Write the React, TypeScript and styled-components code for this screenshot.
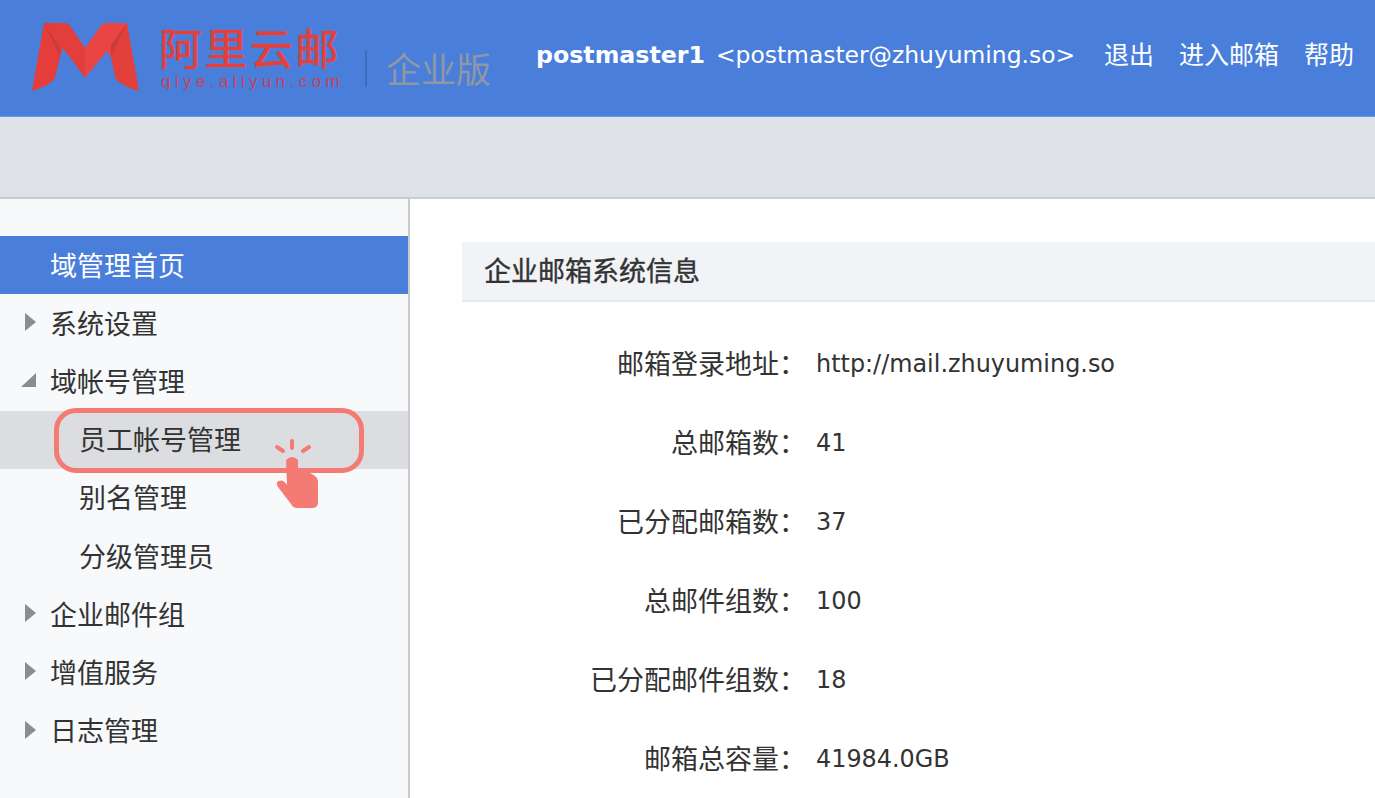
import styled, { createGlobalStyle } from "styled-components";

const GlobalStyle = createGlobalStyle`
  html, body {
    margin: 0;
    padding: 0;
    height: 798px;
    overflow: hidden;
    background: #fff;
    font-family: "DejaVu Sans", "Noto Sans CJK SC", sans-serif;
    color: #333;
  }
`;

const Page = styled.div`
  width: 1375px;
  height: 798px;
  overflow: hidden;
  display: flex;
  flex-direction: column;
`;

const Header = styled.header`
  height: 116px;
  flex: none;
  background: #4a7edb;
  border-bottom: 1px solid #6f97e0;
  display: flex;
  align-items: flex-start;
`;

const Logo = styled.div`
  display: flex;
  margin: 23px 0 0 31px;
  width: 500px;
  flex: none;
`;

const BrandText = styled.div`
  margin-left: 18px;
  width: 190px;
  display: flex;
  flex-direction: column;
`;

const BrandName = styled.div`
  font-family: "Noto Sans CJK SC", sans-serif;
  font-size: 43px;
  line-height: 47px;
  height: 49px;
  letter-spacing: 2.5px;
  color: #e43f3a;
  white-space: nowrap;
  -webkit-text-stroke: 0.6px #e43f3a;
`;

const BrandUrl = styled.div`
  font-family: "Liberation Sans", sans-serif;
  font-size: 17px;
  line-height: 20px;
  letter-spacing: 4.4px;
  margin-left: 2px;
  color: #c9405a;
  white-space: nowrap;
`;

const Divider = styled.div`
  width: 2px;
  height: 37px;
  margin: 27px 0 0 16px;
  background: #3e6cbd;
`;

const Edition = styled.div`
  font-size: 35px;
  line-height: 40px;
  margin: 28px 0 0 19px;
  color: #8f97a6;
  white-space: nowrap;
`;

const UserBar = styled.div`
  display: flex;
  align-items: center;
  height: 30px;
  margin-top: 40px;
  color: #fff;
  font-size: 25px;
  white-space: nowrap;
`;

const UserName = styled.span`
  font-weight: 700;
  font-size: 23.7px;
  margin-left: 5px;
`;

const UserMail = styled.span`
  margin-left: 11px;
  font-size: 23.4px;
`;

const HeaderLink = styled.a<{ $gap: number }>`
  margin-left: ${(p) => p.$gap}px;
  padding-bottom: 4px;
  color: #fff;
`;

const SubBar = styled.div`
  height: 80px;
  flex: none;
  background: #dee1e6;
  border-bottom: 2px solid #c9ccd1;
`;

const Body = styled.div`
  flex: 1;
  display: flex;
  min-height: 0;
`;

const Sidebar = styled.nav`
  width: 408px;
  flex: none;
  position: relative;
  box-sizing: content-box;
  background: #f7f9fb;
  border-right: 2px solid #c9cbcf;
  padding-top: 37px;
`;

const Item = styled.div<{ $active?: boolean; $selected?: boolean; $child?: boolean }>`
  height: 58.2px;
  display: flex;
  align-items: center;
  box-sizing: border-box;
  position: relative;
  padding-left: ${(p) => (p.$child ? 79 : 50)}px;
  padding-bottom: 2px;
  font-size: 27px;
  color: ${(p) => (p.$active ? "#fff" : "#333")};
  background: ${(p) => (p.$active ? "#4a7edb" : p.$selected ? "#dcdde0" : "transparent")};
`;

const Arrow = styled.svg`
  position: absolute;
  left: 21px;
  top: 50%;
  width: 16px;
  height: 20px;
  margin-top: -11px;
`;

const Highlight = styled.div`
  position: absolute;
  left: 54px;
  top: 209px;
  width: 310px;
  height: 65px;
  box-sizing: border-box;
  border: 5px solid #f37b74;
  border-radius: 22px;
`;

const Hand = styled.svg`
  position: absolute;
  left: 270px;
  top: 238px;
  width: 50px;
  height: 72px;
`;

const Main = styled.main`
  flex: 1;
  min-width: 0;
  padding: 43px 0 0 52px;
  background: #fff;
`;

const Panel = styled.h2`
  margin: 0;
  height: 60px;
  box-sizing: border-box;
  padding: 0 0 3px 22px;
  display: flex;
  align-items: center;
  background: #f1f3f7;
  border-bottom: 2px solid #e6e8ec;
  font-size: 27px;
  font-weight: 400;
  color: #333;
  -webkit-text-stroke: 0.4px #333;
`;

const InfoList = styled.div`
  display: flex;
  flex-direction: column;
  padding-top: 22px;
`;

const InfoRow = styled.div`
  height: 79px;
  display: flex;
  align-items: center;
`;

const InfoLabel = styled.div`
  width: 344px;
  flex: none;
  padding-bottom: 3px;
  text-align: right;
  font-size: 27px;
  color: #333;
`;

const InfoValue = styled.div`
  margin-left: 10px;
  font-size: 23.9px;
  color: #333;
`;

const rows = [
  ["邮箱登录地址：", "http://mail.zhuyuming.so"],
  ["总邮箱数：", "41"],
  ["已分配邮箱数：", "37"],
  ["总邮件组数：", "100"],
  ["已分配邮件组数：", "18"],
  ["邮箱总容量：", "41984.0GB"],
];

function ClosedArrow() {
  return (
    <Arrow viewBox="0 0 16 20">
      <path d="M4 1 L15 10 L4 19 Z" fill="#8a8c90" />
    </Arrow>
  );
}

function OpenArrow() {
  return (
    <Arrow viewBox="0 0 16 20">
      <path d="M15 3 L15 17 L0 17 Z" fill="#8a8c90" />
    </Arrow>
  );
}

function App() {
  return (
    <Page>
      <GlobalStyle />
      <Header>
        <Logo>
          <svg width="110" height="70" viewBox="0 0 110 70" style={{ flex: "none" }}>
            <path d="M1 68 L13 0 L29 25 L29 34 L24 55 Q20 62 1 68 Z" fill="#e53e3a" />
            <path d="M108 68 L96 0 L80 22 L80 34 L84 54 Q88 62 108 68 Z" fill="#e2403a" />
            <path d="M13 0 L35 0 Q38 1 40 4 L54 25 L54 55 L32 25 L29 34 Z" fill="#e23f3c" />
            <path d="M96 0 L74 0 Q71 1 69 4 L54 25 L54 55 L76 28 L80 34 Z" fill="#ea4445" />
            <path d="M13 0 L29 25 L29 34 Z" fill="#cb3a3c" />
            <path d="M96 0 L80 22 L80 34 Z" fill="#cb3a3c" />
          </svg>
          <BrandText>
            <BrandName>阿里云邮</BrandName>
            <BrandUrl>qiye.aliyun.com</BrandUrl>
          </BrandText>
          <Divider />
          <Edition>企业版</Edition>
        </Logo>
        <UserBar>
          <UserName>postmaster1</UserName>
          <UserMail>&lt;postmaster@zhuyuming.so&gt;</UserMail>
          <HeaderLink $gap={29}>退出</HeaderLink>
          <HeaderLink $gap={25}>进入邮箱</HeaderLink>
          <HeaderLink $gap={25}>帮助</HeaderLink>
        </UserBar>
      </Header>
      <SubBar />
      <Body>
        <Sidebar>
          <Item $active>域管理首页</Item>
          <Item>
            <ClosedArrow />
            系统设置
          </Item>
          <Item>
            <OpenArrow />
            域帐号管理
          </Item>
          <Item $child $selected>
            员工帐号管理
          </Item>
          <Item $child>别名管理</Item>
          <Item $child>分级管理员</Item>
          <Item>
            <ClosedArrow />
            企业邮件组
          </Item>
          <Item>
            <ClosedArrow />
            增值服务
          </Item>
          <Item>
            <ClosedArrow />
            日志管理
          </Item>
          <Highlight />
          <Hand viewBox="0 0 50 72">
            <g stroke="#f37b74" strokeWidth="4" strokeLinecap="round">
              <path d="M22 4 L22 11" />
              <path d="M7 10 L13 14" />
              <path d="M39 10 L33 14" />
            </g>
            <path
              d="M16 23 Q22 17 28 23 L28 31 L42 37 Q48 40 48 45 L48 65 Q48 71 42 71 L27 71 Q23 71 21 67 L8 50 Q5 45 9 44 Q13 42 17 48 Z"
              fill="#f37b74"
            />
          </Hand>
        </Sidebar>
        <Main>
          <Panel>企业邮箱系统信息</Panel>
          <InfoList>
            {rows.map(([label, value]) => (
              <InfoRow key={label}>
                <InfoLabel>{label}</InfoLabel>
                <InfoValue>{value}</InfoValue>
              </InfoRow>
            ))}
          </InfoList>
        </Main>
      </Body>
    </Page>
  );
}

export default App;
